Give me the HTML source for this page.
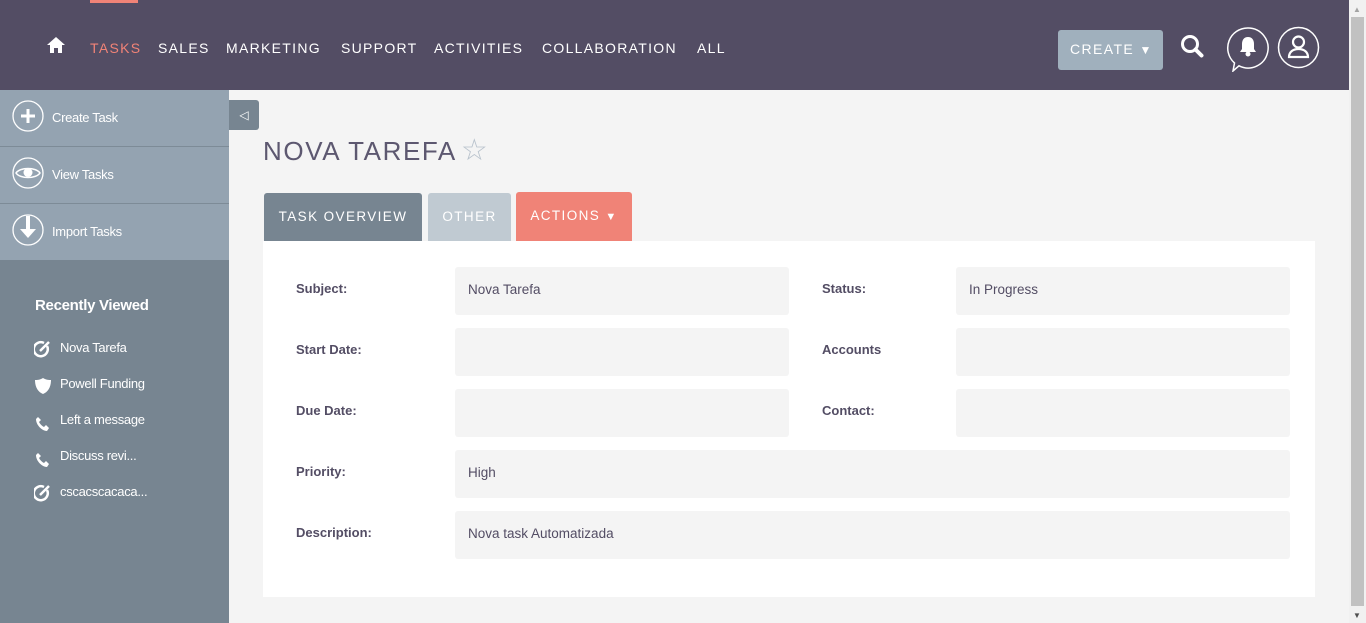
<!DOCTYPE html>
<html><head><style>
*{margin:0;padding:0;box-sizing:border-box}
body{width:1366px;height:623px;overflow:hidden;background:#f4f4f4;font-family:"Liberation Sans",sans-serif;position:relative}
.hdr{position:absolute;left:0;top:0;width:1349px;height:90px;background:#534d64}
.nav{position:absolute;top:40px;color:#fff;font-size:14px;letter-spacing:1.3px}
.side{position:absolute;left:0;top:90px;width:229px;height:533px;background:#778591}
.sb{position:absolute;left:0;width:229px;height:57px;background:#94a3b1;border-bottom:1px solid #7d8b97;color:#fff;font-size:13px}
.sb span{position:absolute;left:52px;top:20px;letter-spacing:-.3px}
.sb svg{position:absolute;left:12px;top:10px}
.rv{position:absolute;left:60px;color:#fff;font-size:13px;letter-spacing:-.3px}
.ri{position:absolute;left:34px}
.tab{position:absolute;top:193px;height:48px;color:#fff;font-size:13.5px;letter-spacing:1.4px;line-height:48px;text-align:center;border-radius:3px 3px 0 0}
.panel{position:absolute;left:263px;top:241px;width:1052px;height:356px;background:#fff}
.lb{position:absolute;font-size:13px;font-weight:bold;color:#534d64}
.vb{position:absolute;height:48px;background:#f4f4f4;border-radius:3px;font-size:13.5px;color:#534d64;padding:15px 13px}
.scr{position:absolute;right:0;top:0;width:17px;height:623px;background:#f1f1f1}
</style></head><body>
<div class="hdr">
<div style="position:absolute;left:90px;top:0;width:48px;height:3px;background:#f08377"></div>
<svg style="position:absolute;left:46px;top:36px" width="20" height="18" viewBox="0 0 20 18"><path d="M10 1L1 9h3v8h4v-5h4v5h4V9h3z" fill="#fff"/></svg>
<div class="nav" style="left:90px;color:#f08377">TASKS</div>
<div class="nav" style="left:158px">SALES</div>
<div class="nav" style="left:226px">MARKETING</div>
<div class="nav" style="left:341px">SUPPORT</div>
<div class="nav" style="left:434px">ACTIVITIES</div>
<div class="nav" style="left:542px">COLLABORATION</div>
<div class="nav" style="left:697px">ALL</div>
<div style="position:absolute;left:1058px;top:30px;width:105px;height:40px;background:#a0b0bd;border-radius:3px;color:#fff;font-size:14px;letter-spacing:1.4px;line-height:38px;padding-left:12px">CREATE <span style="font-size:12px">▼</span></div>
<svg style="position:absolute;left:1180px;top:34px" width="26" height="26" viewBox="0 0 26 26"><circle cx="10" cy="10" r="7.5" fill="none" stroke="#fff" stroke-width="3"/><path d="M15.5 15.5l6 6" stroke="#fff" stroke-width="4" stroke-linecap="round"/></svg>
<svg style="position:absolute;left:1226px;top:26px" width="44" height="46" viewBox="0 0 44 46"><path d="M22 2a20 20 0 1 1-9 37.8L7 45l1.5-8A20 20 0 0 1 22 2z" fill="none" stroke="#fff" stroke-width="1.5"/><path d="M22 11c-4 0-6 3-6 7v5l-2 3h16l-2-3v-5c0-4-2-7-6-7z" fill="#fff"/><circle cx="22" cy="28" r="2.5" fill="#fff"/></svg>
<svg style="position:absolute;left:1277px;top:26px" width="43" height="43" viewBox="0 0 43 43"><circle cx="21.5" cy="21.5" r="20" fill="none" stroke="#fff" stroke-width="1.5"/><circle cx="21.5" cy="16" r="5.5" fill="none" stroke="#fff" stroke-width="2.2"/><path d="M12 31c0-5 4-8 9.5-8s9.5 3 9.5 8z" fill="none" stroke="#fff" stroke-width="2.2"/></svg>
</div>
<div class="side">
<div class="sb" style="top:0"><svg width="32" height="32"><circle cx="16" cy="16" r="15" fill="none" stroke="#fff" stroke-width="1.3"/><path d="M16 9v14M9 16h14" stroke="#fff" stroke-width="3"/></svg><span>Create Task</span></div>
<div class="sb" style="top:57px"><svg width="32" height="32"><circle cx="16" cy="16" r="15" fill="none" stroke="#fff" stroke-width="1.3"/><path d="M4 16c4-6 20-6 24 0-4 6-20 6-24 0z" fill="none" stroke="#fff" stroke-width="1.5"/><circle cx="16" cy="15.5" r="4.5" fill="#fff"/></svg><span>View Tasks</span></div>
<div class="sb" style="top:114px;height:56px;border:0"><svg width="32" height="32"><circle cx="16" cy="16" r="15" fill="none" stroke="#fff" stroke-width="1.3"/><path d="M16 2v14" stroke="#fff" stroke-width="4"/><path d="M8 15h16l-8 9z" fill="#fff"/></svg><span>Import Tasks</span></div>
<div style="position:absolute;left:35px;top:207px;color:#fff;font-weight:bold;font-size:15px;letter-spacing:-.3px">Recently Viewed</div>
<svg class="ri" style="top:250px" width="18" height="18" viewBox="0 0 18 18"><path d="M13 6A7 7 0 1 1 10 3" fill="none" stroke="#fff" stroke-width="2.5"/><path d="M6 11l9-9" stroke="#fff" stroke-width="2.5"/></svg><div class="rv" style="top:250px">Nova Tarefa</div>
<svg class="ri" style="top:287px" width="18" height="18" viewBox="0 0 18 18"><path d="M9 1C6 3 3 3 1 3c0 7 3 12 8 14 5-2 8-7 8-14-2 0-5 0-8-2z" fill="#fff"/></svg><div class="rv" style="top:286px">Powell Funding</div>
<svg class="ri" style="top:324px" width="18" height="18" viewBox="0 0 18 18"><path d="M4 3l3 3-2 2c1 2 3 4 5 5l2-2 3 3-2 3C8 17 2 11 2 5z" fill="#fff"/></svg><div class="rv" style="top:322px">Left a message</div>
<svg class="ri" style="top:360px" width="18" height="18" viewBox="0 0 18 18"><path d="M4 3l3 3-2 2c1 2 3 4 5 5l2-2 3 3-2 3C8 17 2 11 2 5z" fill="#fff"/></svg><div class="rv" style="top:358px">Discuss revi...</div>
<svg class="ri" style="top:394px" width="18" height="18" viewBox="0 0 18 18"><path d="M13 6A7 7 0 1 1 10 3" fill="none" stroke="#fff" stroke-width="2.5"/><path d="M6 11l9-9" stroke="#fff" stroke-width="2.5"/></svg><div class="rv" style="top:394px">cscacscacaca...</div>
</div>
<div style="position:absolute;left:229px;top:100px;width:30px;height:30px;background:#778591;border-radius:0 3px 3px 0;color:#fff;font-size:12px;text-align:center;line-height:30px">◁</div>
<div style="position:absolute;left:263px;top:133px;font-size:26px;color:#5d5870;letter-spacing:1.6px">NOVA TAREFA<span style="color:#b8c2cc;font-size:30px;margin-left:4px">☆</span></div>
<div class="tab" style="left:264px;width:158px;background:#778591">TASK OVERVIEW</div>
<div class="tab" style="left:428px;width:83px;background:#c0cad2">OTHER</div>
<div class="tab" style="left:516px;top:192px;height:49px;width:116px;background:#f08377">ACTIONS <span style="font-size:11px">▼</span></div>
<div class="panel"></div>
<div class="lb" style="left:296px;top:281px">Subject:</div><div class="vb" style="left:455px;top:267px;width:334px">Nova Tarefa</div>
<div class="lb" style="left:822px;top:281px">Status:</div><div class="vb" style="left:956px;top:267px;width:334px">In Progress</div>
<div class="lb" style="left:296px;top:342px">Start Date:</div><div class="vb" style="left:455px;top:328px;width:334px"></div>
<div class="lb" style="left:822px;top:342px">Accounts</div><div class="vb" style="left:956px;top:328px;width:334px"></div>
<div class="lb" style="left:296px;top:403px">Due Date:</div><div class="vb" style="left:455px;top:389px;width:334px"></div>
<div class="lb" style="left:822px;top:403px">Contact:</div><div class="vb" style="left:956px;top:389px;width:334px"></div>
<div class="lb" style="left:296px;top:464px">Priority:</div><div class="vb" style="left:455px;top:450px;width:835px">High</div>
<div class="lb" style="left:296px;top:525px">Description:</div><div class="vb" style="left:455px;top:511px;width:835px">Nova task Automatizada</div>
<div class="scr"><div style="position:absolute;left:2px;top:17px;width:13px;height:589px;background:#c1c1c1"></div><div style="position:absolute;left:4px;top:5px;font-size:8px;color:#a3a3a3">▲</div><div style="position:absolute;left:4px;bottom:3px;font-size:8px;color:#505050">▼</div></div>
</body></html>
